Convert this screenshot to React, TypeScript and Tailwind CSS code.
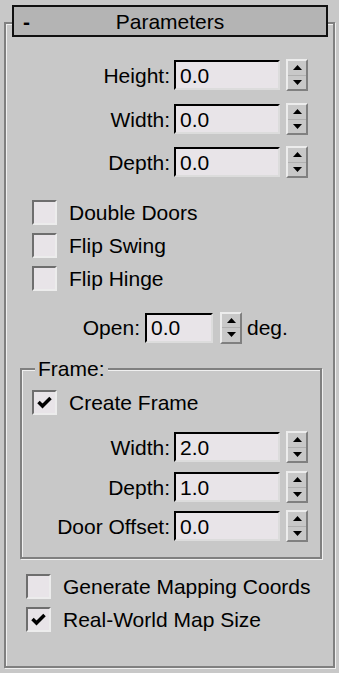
// 3ds Max style "Parameters" rollout for a door object.
// Etched frames, sunken spinner fields and check boxes, all laid out in flow.

type Field = { label: string; value: string };

const top: Field[] = [
  { label: "Height:", value: "0.0" },
  { label: "Width:", value: "0.0" },
  { label: "Depth:", value: "0.0" },
];

const frame: Field[] = [
  { label: "Width:", value: "2.0" },
  { label: "Depth:", value: "1.0" },
  { label: "Door Offset:", value: "0.0" },
];

function Spinner() {
  return (
    <div className="flex h-[32px] w-[22px] shrink-0 flex-col border-2 border-t-[#ececec] border-l-[#ececec] border-b-[#808080] border-r-[#808080] bg-[#c8c8c8]">
      <div className="flex flex-1 items-center justify-center border-b border-[#b0b0b0]">
        <svg width="9" height="5" viewBox="0 0 9 5">
          <path d="M4.5 0 L9 5 L0 5 Z" fill="#000" />
        </svg>
      </div>
      <div className="flex flex-1 items-center justify-center">
        <svg width="9" height="5" viewBox="0 0 9 5">
          <path d="M0 0 L9 0 L4.5 5 Z" fill="#000" />
        </svg>
      </div>
    </div>
  );
}

function Input({ value, w }: { value: string; w: string }) {
  return (
    <div
      className={`flex h-[30px] shrink-0 items-center border-2 border-t-black border-l-black border-b-[#dcdcdc] border-r-[#dcdcdc] bg-[#e8e4e8] pl-[4px] ${w}`}
    >
      {value}
    </div>
  );
}

function Check({ checked }: { checked?: boolean }) {
  return (
    <div className="flex h-[25px] w-[25px] shrink-0 items-center justify-center border-2 border-t-[#6e6e6e] border-l-[#6e6e6e] border-b-[#ececec] border-r-[#ececec] bg-[#e8e4e8]">
      {checked && (
        <svg width="15" height="13" viewBox="0 0 15 13">
          <path d="M1.5 6 L5.5 10 L13.5 2" fill="none" stroke="#000" strokeWidth="3.5" />
        </svg>
      )}
    </div>
  );
}

function CheckRow({ label, checked, className }: { label: string; checked?: boolean; className: string }) {
  return (
    <div className={`flex h-[25px] items-center gap-[12px] ${className}`}>
      <Check checked={checked} />
      <span>{label}</span>
    </div>
  );
}

function FieldRow({ f, labelW, className }: { f: Field; labelW: string; className: string }) {
  return (
    <div className={`flex h-[30px] items-center ${className}`}>
      <span className={`shrink-0 text-right ${labelW}`}>{f.label}</span>
      <div className="ml-[4px]">
        <Input value={f.value} w="w-[106px]" />
      </div>
      <div className="ml-[6px]">
        <Spinner />
      </div>
    </div>
  );
}

export default function App() {
  return (
    <div className="h-[673px] w-[339px] overflow-hidden bg-[#c8c8c8] pl-[4px] pt-[22px] font-['Liberation_Sans',Arial,sans-serif] text-[21px] leading-none text-black">
      <div className="h-[646px] w-[331px] border-2 border-[#808080] shadow-[1px_1px_0_#f0f0f0,inset_1px_1px_0_#f0f0f0]">
        <div className="-mt-[19px] ml-[6px] mr-[5px] flex h-[32px] items-center border-2 border-[#101010] bg-[#b4b4b4]">
          <span className="ml-[9px] w-[10px] font-bold">-</span>
          <span className="flex-1 pr-[19px] text-center">Parameters</span>
        </div>

        <FieldRow f={top[0]} labelW="w-[164px]" className="mt-[23px]" />
        <FieldRow f={top[1]} labelW="w-[164px]" className="mt-[14px]" />
        <FieldRow f={top[2]} labelW="w-[164px]" className="mt-[13px]" />

        <CheckRow label="Double Doors" className="ml-[26px] mt-[23px]" />
        <CheckRow label="Flip Swing" className="ml-[26px] mt-[8px]" />
        <CheckRow label="Flip Hinge" className="ml-[26px] mt-[8px]" />

        <div className="mt-[21px] flex h-[31px] items-center">
          <span className="w-[134px] shrink-0 text-right">Open:</span>
          <div className="ml-[5px]">
            <Input value="0.0" w="w-[68px]" />
          </div>
          <div className="ml-[7px]">
            <Spinner />
          </div>
          <span className="ml-[5px]">deg.</span>
        </div>

        <div className="ml-[14px] mt-[25px] h-[191px] w-[302px] border-2 border-[#808080] shadow-[1px_1px_0_#f0f0f0,inset_1px_1px_0_#f0f0f0]">
          <span className="-mt-[13px] ml-[13px] block w-fit bg-[#c8c8c8] px-[3px] leading-[24px]">Frame:</span>
          <CheckRow label="Create Frame" checked className="ml-[10px] mt-[9px]" />
          <FieldRow f={frame[0]} labelW="w-[148px]" className="mt-[17px]" />
          <FieldRow f={frame[1]} labelW="w-[148px]" className="mt-[10px]" />
          <FieldRow f={frame[2]} labelW="w-[148px]" className="mt-[9px]" />
        </div>

        <CheckRow label="Generate Mapping Coords" className="ml-[20px] mt-[15px]" />
        <CheckRow label="Real-World Map Size" checked className="ml-[20px] mt-[8px]" />
      </div>
    </div>
  );
}
